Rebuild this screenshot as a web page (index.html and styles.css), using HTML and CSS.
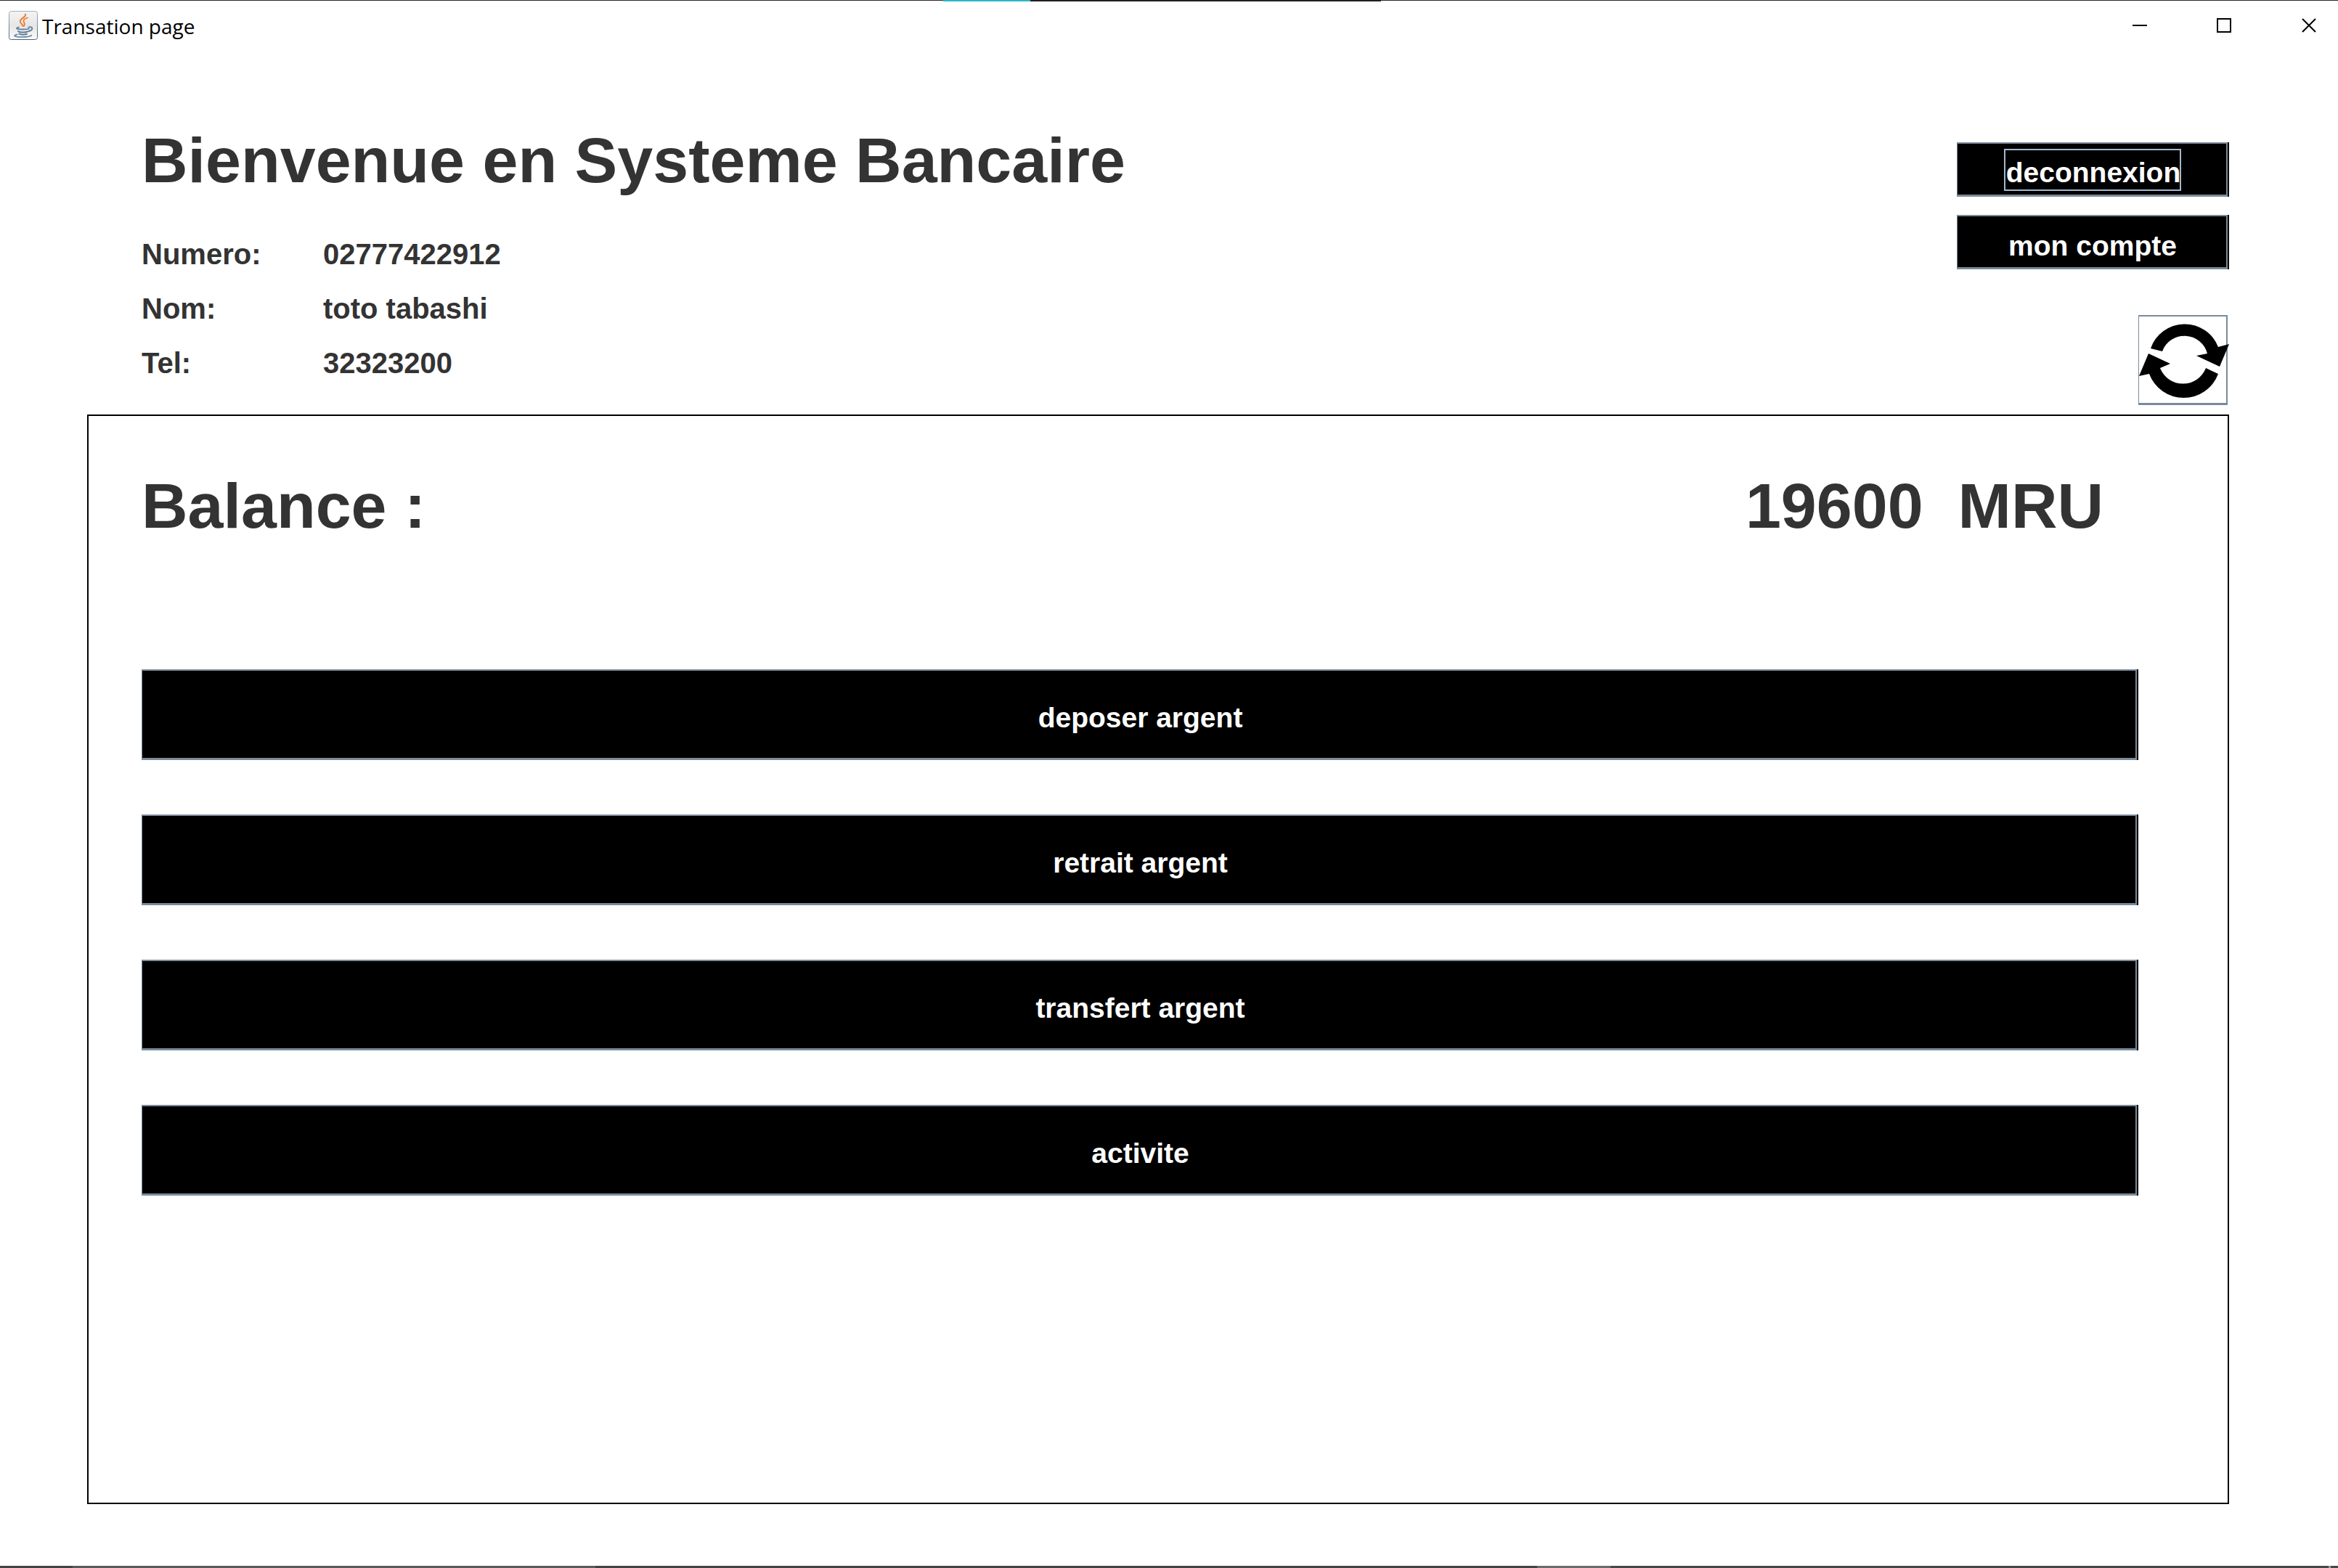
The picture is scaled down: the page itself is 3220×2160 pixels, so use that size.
FILE: index.html
```html
<!DOCTYPE html>
<html lang="fr">
<head>
<meta charset="utf-8">
<title>Transation page</title>
<link rel="stylesheet" href="styles.css">
</head>
<body>
<div class="window">
  <div class="top-edge"><span class="edge-teal"></span><span class="edge-dark"></span></div>
  <header class="titlebar">
    <svg class="app-icon" viewBox="0 0 40 40" aria-hidden="true">
      <defs>
        <linearGradient id="tile" x1="0" y1="0" x2="0" y2="1"><stop offset="0" stop-color="#f4f4f4"/><stop offset=".5" stop-color="#e6e6e6"/><stop offset="1" stop-color="#fafafa"/></linearGradient>
        <linearGradient id="edge" x1="0" y1="0" x2="0" y2="1"><stop offset="0" stop-color="#9db4c6"/><stop offset="1" stop-color="#4b6578"/></linearGradient>
      </defs>
      <rect x=".5" y=".5" width="39" height="39" rx="3" fill="url(#tile)" stroke="url(#edge)"/>
      <g fill="none" stroke="#ec8032" stroke-linecap="round">
        <path d="M23 4.500C24.500 9 15.500 10 15.800 14.500C16 17 19 18.500 19.500 21" stroke-width="2"/>
        <path d="M26 9.500C21 11 19.500 13 21 15.500C22.500 18 22 19.500 21 21" stroke-width="1.800"/>
      </g>
      <g fill="none" stroke="#5f7f9c" stroke-linecap="round">
        <path d="M14 22.500C8 24 11 25.500 19 25.500C24 25.500 27 25 28 24.500" stroke-width="1.800"/>
        <path d="M13 28C15 30 23 30 26 28.500M14.500 31.500C16 33 22 33 25 32" stroke-width="2"/>
        <path d="M27 22.500C34 20.500 34 26.500 27.500 28" stroke-width="1.800"/>
        <path d="M12 32.500C5 34 8 36 18 36C25 36 30 35.500 31.500 33.500" stroke-width="1.500"/>
      </g>
    </svg>
    <span class="window-title">Transation page</span>
    <div class="window-controls">
      <button class="control" aria-label="Minimize"><svg viewBox="0 0 20 20"><path d="M0 10H20"/></svg></button>
      <button class="control" aria-label="Maximize"><svg viewBox="0 0 20 20"><path d="M1 1H19V19H1Z"/></svg></button>
      <button class="control" aria-label="Close"><svg viewBox="0 0 20 20"><path d="M1 1L19 19M19 1L1 19"/></svg></button>
    </div>
  </header>

  <main class="page">
    <section class="intro">
      <div class="identity">
        <h1 class="heading">Bienvenue en Systeme Bancaire</h1>
        <dl class="details">
          <dt>Numero:</dt><dd>02777422912</dd>
          <dt>Nom:</dt><dd>toto tabashi</dd>
          <dt>Tel:</dt><dd>32323200</dd>
        </dl>
      </div>
      <div class="account-actions">
        <button class="btn btn-small"><span class="focus-ring">deconnexion</span></button>
        <button class="btn btn-small">mon compte</button>
        <button class="refresh" aria-label="Actualiser">
          <svg viewBox="0 0 125 124" aria-hidden="true">
            <path d="M17 46A49.500 49.500 0 0 1 110 44L125 40L112 71L80 56L95 53A32.500 32.500 0 0 0 33 50Z"/>
            <path d="M110 81A50.700 50.700 0 0 1 15 81L1 84L14 53L44 67L30 73A33.800 33.800 0 0 0 93 73Z"/>
          </svg>
        </button>
      </div>
    </section>

    <section class="panel">
      <div class="balance">
        <h2 class="heading">Balance :</h2>
        <p class="heading amount"><span>19600</span><span>MRU</span></p>
      </div>
      <div class="operations">
        <button class="btn">deposer argent</button>
        <button class="btn">retrait argent</button>
        <button class="btn">transfert argent</button>
        <button class="btn">activite</button>
      </div>
    </section>
  </main>
  <div class="bottom-edge"></div>
</div>
</body>
</html>
```
FILE: styles.css
```css
* { box-sizing: border-box; }

body {
  margin: 0;
  background: #fff;
  color: #333;
  font-family: "Liberation Sans", Arial, sans-serif;
  font-weight: bold;
}

button { font: inherit; border: 0; padding: 0; background: none; }

.window {
  display: flex;
  flex-direction: column;
  min-height: 100vh;
}

/* Slivers of the desktop above and below the window */
.top-edge {
  display: flex;
  height: 2px;
  padding-left: 1299px;
  background: linear-gradient(#2a2829 1px, #fff 1px);
}
.edge-teal { width: 120px; background: #2bb8c8; }
.edge-dark { width: 483px; background: #221f20; }

.bottom-edge {
  height: 3px;
  background: linear-gradient(90deg, #444242 100px, #5c5a5a 100px 820px, #444242 820px 2117px, #6c6a6a 2117px 2218px, #484646 2218px 3207px, #999 3207px 3210px, #484646 3210px);
}

.titlebar {
  display: flex;
  align-items: center;
  height: 66px;
  padding-left: 12px;
  color: #000;
}
.app-icon { width: 40px; height: 40px; }
.window-title {
  flex: 1;
  padding: 2px 0 0 6px;
  font: 28px/40px "Open Sans", "Noto Sans", sans-serif;
}
.window-controls { display: flex; }
.control {
  display: grid;
  place-items: center;
  width: 116px;
  height: 66px;
}
.control:last-child { width: 99px; padding-left: 18px; }
.control svg { width: 20px; height: 20px; fill: none; stroke: #000; stroke-width: 2; }

.page {
  flex: 1;
  display: flex;
  flex-direction: column;
  padding: 103px 150px 85px 120px;
}

.intro {
  display: flex;
  justify-content: space-between;
  height: 400px;
  padding-left: 75px;
}
.heading { margin: 0; font-size: 88px; line-height: 100px; }
.details {
  display: grid;
  grid-template-columns: 250px 1fr;
  grid-auto-rows: 75px;
  margin: 42px 0 0;
  font-size: 40px;
  line-height: 75px;
}
.details dd { margin: 0; }

.account-actions {
  display: flex;
  flex-direction: column;
  align-items: flex-end;
  gap: 25px;
  padding-top: 25px;
}

.btn {
  display: flex;
  align-items: center;
  justify-content: center;
  width: 100%;
  height: 125px;
  padding: 10px 0 0 4px;
  background: #000;
  border: solid #7a8a99;
  border-width: 2px 2px 3px 1px;
  box-shadow: 2px 0 #000;
  color: #fff;
  font-size: 39px;
  line-height: 46px;
}
.btn-small {
  width: 373px;
  height: 75px;
  margin-right: 2px;
  padding: 11px 0 0 2px;
}
.focus-ring {
  height: 58px;
  margin-top: -9px;
  padding: 10px 1px 0 3px;
  outline: 2px solid #a3b8cc;
  outline-offset: -2px;
}

.refresh {
  width: 123px;
  height: 124px;
  margin: 38px 2px 0 0;
  border: solid #7a8a99;
  border-width: 2px 2px 3px 1px;
}
.refresh svg { display: block; width: 125px; height: 124px; margin: -2px 0 0 -1px; }

.panel {
  flex: 1;
  padding: 74px 123px 74px 73px;
  border: 2px solid #000;
}
.balance {
  display: flex;
  justify-content: space-between;
  padding-right: 48px;
}
.amount { display: flex; gap: 48px; }
.operations {
  display: flex;
  flex-direction: column;
  gap: 75px;
  padding: 175px 2px 0 0;
}
```
